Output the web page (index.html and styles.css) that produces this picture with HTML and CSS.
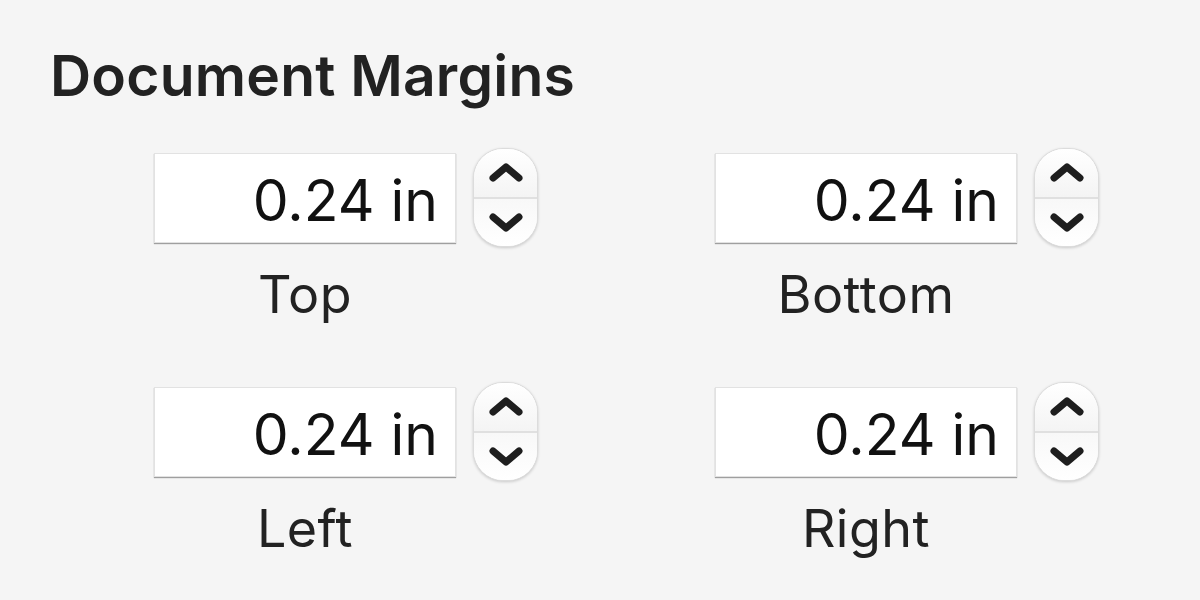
FILE: index.html
```html
<!DOCTYPE html>
<html lang="en">
    <head>
        <meta charset="utf-8">
        <title>Document Margins</title>
        <link rel="stylesheet" href="styles.css">
    </head>
    <body>
        <div class="panel">
            <h1 class="title">Document Margins</h1>

            <div class="grid">
                <!-- Top -->
                <div class="cell">
                    <div class="control">
                        <div class="field">0.24 in</div>
                        <div class="stepper">
                            <div class="half up">
                                <svg width="36" height="22" viewBox="0 0 36 22"><path d="M5 16 L18 5 L31 16"/></svg>
                            </div>
                            <div class="half down">
                                <svg width="36" height="22" viewBox="0 0 36 22"><path d="M5 6 L18 17 L31 6"/></svg>
                            </div>
                        </div>
                    </div>
                    <div class="label">Top</div>
                </div>

                <!-- Bottom -->
                <div class="cell">
                    <div class="control">
                        <div class="field">0.24 in</div>
                        <div class="stepper">
                            <div class="half up">
                                <svg width="36" height="22" viewBox="0 0 36 22"><path d="M5 16 L18 5 L31 16"/></svg>
                            </div>
                            <div class="half down">
                                <svg width="36" height="22" viewBox="0 0 36 22"><path d="M5 6 L18 17 L31 6"/></svg>
                            </div>
                        </div>
                    </div>
                    <div class="label">Bottom</div>
                </div>

                <!-- Left -->
                <div class="cell">
                    <div class="control">
                        <div class="field">0.24 in</div>
                        <div class="stepper">
                            <div class="half up">
                                <svg width="36" height="22" viewBox="0 0 36 22"><path d="M5 16 L18 5 L31 16"/></svg>
                            </div>
                            <div class="half down">
                                <svg width="36" height="22" viewBox="0 0 36 22"><path d="M5 6 L18 17 L31 6"/></svg>
                            </div>
                        </div>
                    </div>
                    <div class="label">Left</div>
                </div>

                <!-- Right -->
                <div class="cell">
                    <div class="control">
                        <div class="field">0.24 in</div>
                        <div class="stepper">
                            <div class="half up">
                                <svg width="36" height="22" viewBox="0 0 36 22"><path d="M5 16 L18 5 L31 16"/></svg>
                            </div>
                            <div class="half down">
                                <svg width="36" height="22" viewBox="0 0 36 22"><path d="M5 6 L18 17 L31 6"/></svg>
                            </div>
                        </div>
                    </div>
                    <div class="label">Right</div>
                </div>
            </div>
        </div>
    </body>
</html>
```

FILE: styles.css
```css
html, body {
    margin: 0;
    background: #f5f5f5;
}
body {
    font-family: Inter, "Noto Sans", sans-serif;
    color: #222;
}
.panel {
    padding: 42px 0 0 50px;
}
.title {
    margin: 0;
    font-size: 57px;
    font-weight: 600;
    line-height: 68px;
    letter-spacing: 0.2px;
}
.grid {
    display: grid;
    grid-template-columns: 561px 1fr;
    row-gap: 57px;
    margin: 38px 0 0 104px;
}
.control {
    display: flex;
    align-items: center;
    gap: 17px;
}
.field {
    box-sizing: border-box;
    width: 302px;
    height: 90px;
    background: #fff;
    border: 1px solid #e2e2e2;
    box-shadow: 0 1px 1px rgba(0, 0, 0, 0.35);
    font-size: 57px;
    line-height: 94px;
    text-align: right;
    padding-right: 17px;
    color: #111;
    overflow: hidden;
}
.stepper {
    box-sizing: border-box;
    width: 65px;
    height: 99px;
    border-radius: 30px;
    background: #fff;
    border: 1px solid #dcdcdc;
    box-shadow: 0 1px 3px rgba(0, 0, 0, 0.18);
    display: flex;
    flex-direction: column;
    overflow: hidden;
}
.half {
    flex: 1;
    display: flex;
    justify-content: center;
    align-items: center;
}
.up {
    border-bottom: 2px solid #e0e0e0;
    background: linear-gradient(#fff, #f4f4f4);
}
.down {
    background: linear-gradient(#f8f8f8, #fff);
}
.half svg path {
    fill: none;
    stroke: #1e1e1e;
    stroke-width: 7;
    stroke-linecap: round;
    stroke-linejoin: round;
}
.label {
    width: 302px;
    text-align: center;
    font-size: 52px;
    line-height: 60px;
    letter-spacing: 0.5px;
    margin-top: 18px;
}
```
